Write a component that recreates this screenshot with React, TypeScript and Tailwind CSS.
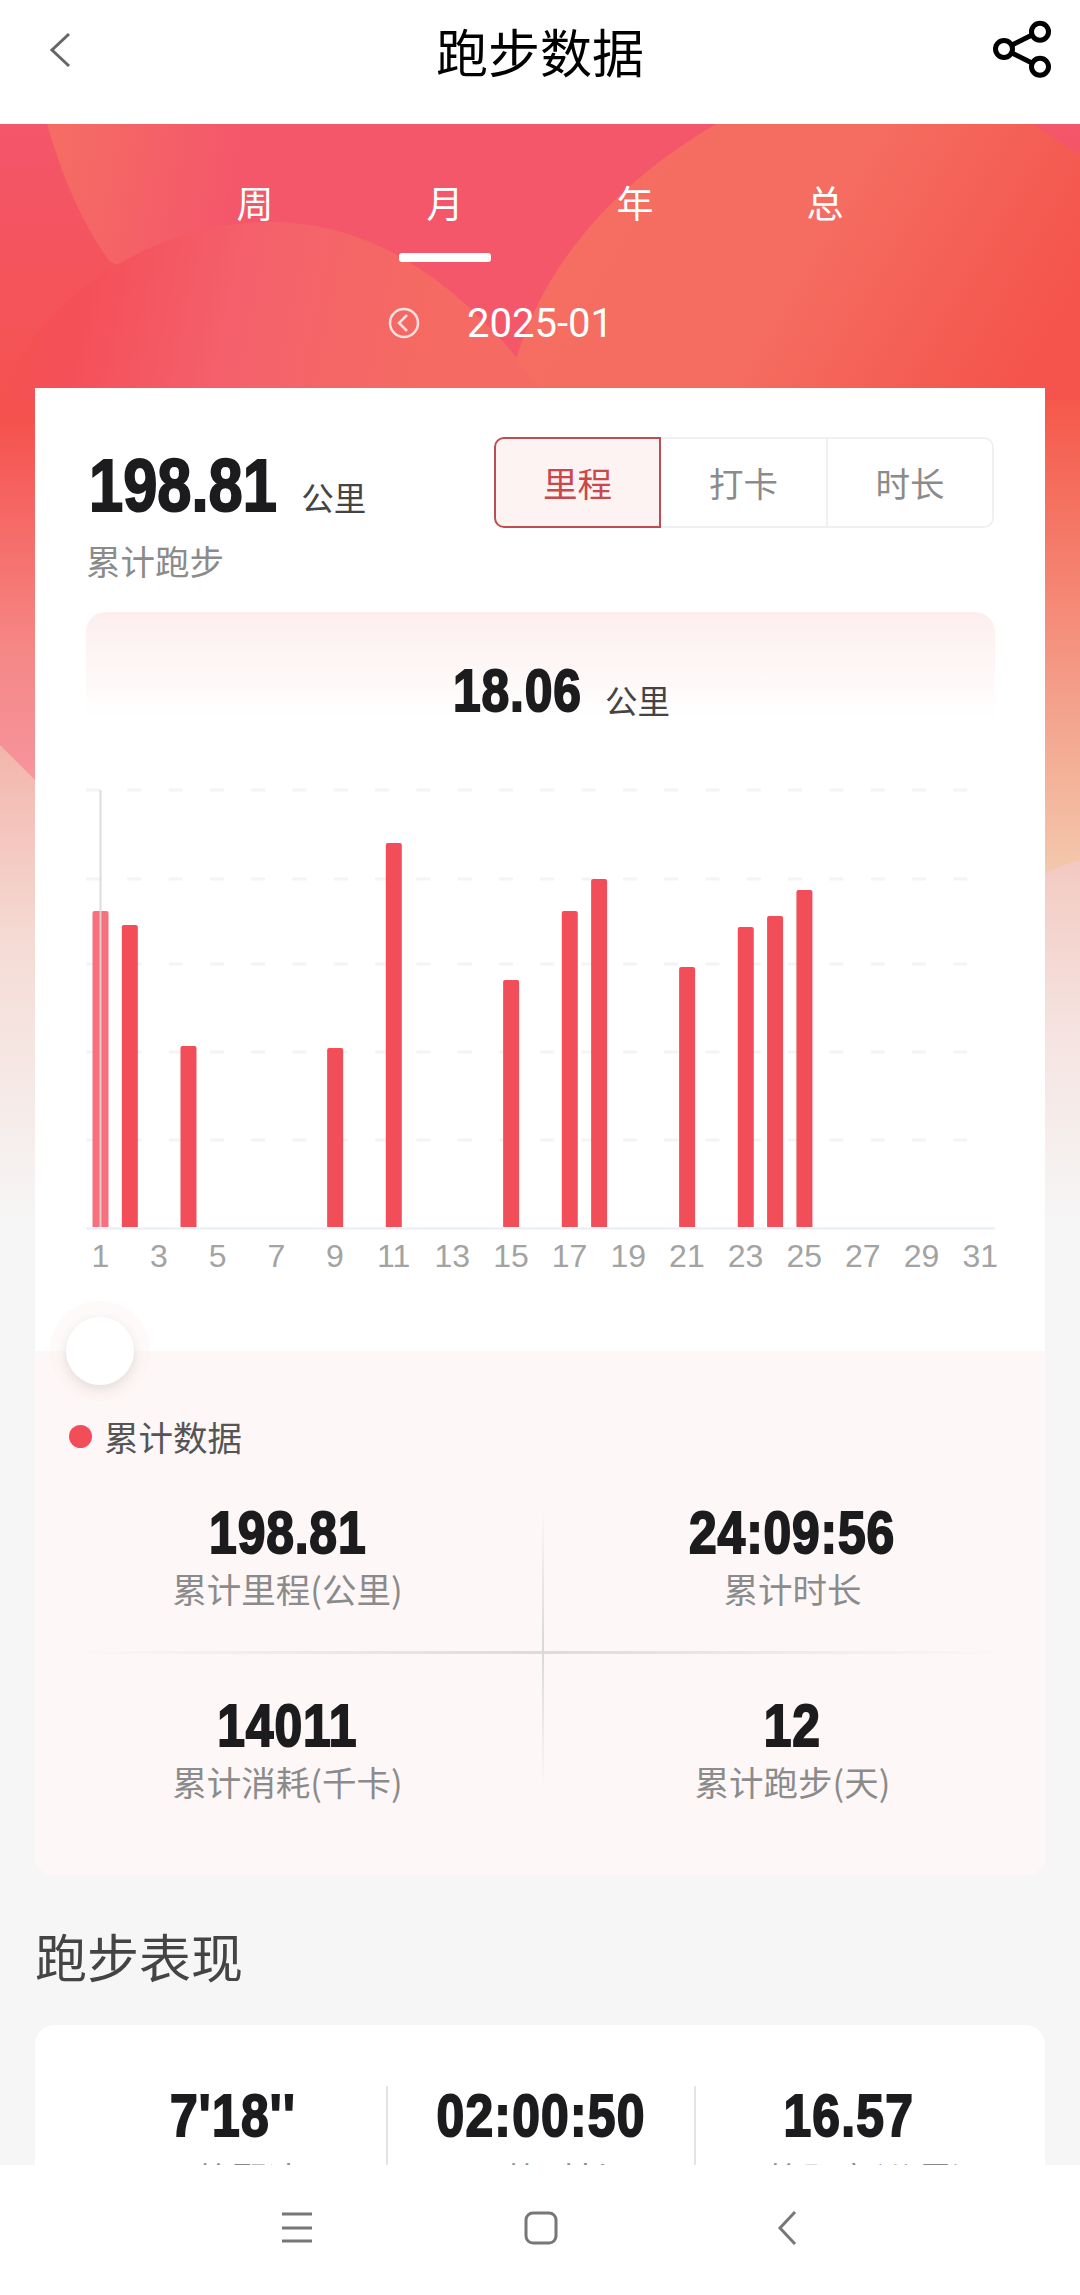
const N = "inline-block font-['Liberation_Sans',sans-serif] font-bold text-[#1c1c1e] [-webkit-text-stroke:2px_#1c1c1e] scale-x-[0.83]";
const C = "font-['Noto_Sans_CJK_SC','Liberation_Sans',sans-serif]";

const bars: [number, number][] = [[1, 911], [2, 925], [4, 1046], [9, 1048], [11, 843], [15, 980], [17, 911], [18, 879], [21, 967], [23, 927], [24, 916], [25, 890]];

function HeroBg() {
  return (
    <svg className="absolute left-0 top-[124px] w-[1080px] h-[1100px]" viewBox="0 124 1080 1100" aria-hidden="true">
      <defs>
        <linearGradient id="base" x1="0" y1="124" x2="0" y2="1224" gradientUnits="userSpaceOnUse">
          <stop offset="0" stopColor="#f4566a" />
          <stop offset="0.27" stopColor="#f5524e" />
          <stop offset="0.48" stopColor="#f58886" />
          <stop offset="0.58" stopColor="#f6929a" />
          <stop offset="0.78" stopColor="#f5dcd8" />
          <stop offset="1" stopColor="#f6f6f6" />
        </linearGradient>
        <linearGradient id="orange" x1="520" y1="140" x2="1000" y2="420" gradientUnits="userSpaceOnUse">
          <stop offset="0" stopColor="#f56f62" />
          <stop offset="0.55" stopColor="#f56c60" />
          <stop offset="1" stopColor="#f4544c" />
        </linearGradient>
        <linearGradient id="pink" x1="60" y1="124" x2="600" y2="230" gradientUnits="userSpaceOnUse">
          <stop offset="0" stopColor="#f56c64" />
          <stop offset="0.35" stopColor="#f4566a" />
          <stop offset="1" stopColor="#f4566a" />
        </linearGradient>
        <linearGradient id="lower" x1="0" y1="300" x2="420" y2="388" gradientUnits="userSpaceOnUse">
          <stop offset="0" stopColor="#f5524e" />
          <stop offset="0.2" stopColor="#f4505a" />
          <stop offset="0.55" stopColor="#f4616c" />
          <stop offset="1" stopColor="#f56a62" />
        </linearGradient>
        <linearGradient id="rightTint" x1="0" y1="400" x2="0" y2="880" gradientUnits="userSpaceOnUse">
          <stop offset="0" stopColor="#f5584a" />
          <stop offset="0.5" stopColor="#f4927e" />
          <stop offset="1" stopColor="#f3caae" />
        </linearGradient>
        <linearGradient id="leftLow" x1="0" y1="740" x2="0" y2="1224" gradientUnits="userSpaceOnUse">
          <stop offset="0" stopColor="#f3b4aa" />
          <stop offset="0.43" stopColor="#f5dcd6" />
          <stop offset="1" stopColor="#f6f6f6" />
        </linearGradient>
        <linearGradient id="rightLow" x1="0" y1="850" x2="0" y2="1224" gradientUnits="userSpaceOnUse">
          <stop offset="0" stopColor="#f3c8c0" />
          <stop offset="0.5" stopColor="#f5e4e1" />
          <stop offset="1" stopColor="#f6f6f6" />
        </linearGradient>
      </defs>
      <rect x="0" y="124" width="1080" height="1100" fill="url(#base)" />
      <path d="M47 124 C62 175 80 220 110 262 L560 400 L720 124 Z" fill="url(#pink)" />
      <path d="M0 400 C40 290 160 222 270 222 C380 222 470 290 550 400 Z" fill="url(#lower)" />
      <path d="M716 124 C620 180 545 260 516 360 L550 400 L1080 400 L1080 155 L1033 124 Z" fill="url(#orange)" />
      <rect x="1000" y="400" width="80" height="480" fill="url(#rightTint)" />
      <path d="M0 745 L40 785 L40 1224 L0 1224 Z" fill="url(#leftLow)" />
      <path d="M1000 900 C1030 880 1060 865 1080 860 L1080 1224 L1000 1224 Z" fill="url(#rightLow)" />
    </svg>
  );
}

function Stat({ value, label }: { value: string; label: string }) {
  return (
    <div className="flex flex-col items-center">
      <div className={`${N} text-[60px] leading-[44px] tracking-[1px]`}>{value}</div>
      <div className={`${C} mt-[11px] text-[34.5px] leading-[44px] text-[#8b8b8b]`}>{label}</div>
    </div>
  );
}

export default function App() {
  return (
    <div className={`${C} relative w-[1080px] h-[2295px] overflow-hidden bg-[#f6f6f6]`}>
      <HeroBg />
      <header className="relative flex h-[124px] items-start justify-between bg-white">
        <svg className="ml-[48px] mt-[32px] h-[36px] w-[24px]" viewBox="0 0 24 36" fill="none" stroke="#666" strokeWidth="3" aria-hidden="true">
          <path d="M21 2 L4 18 L21 34" />
        </svg>
        <h1 className="absolute left-0 right-0 top-[16px] text-center text-[52px] leading-[70px] text-black">跑步数据</h1>
        <svg className="mr-[26px] mt-[18px] h-[62px] w-[62px]" viewBox="0 0 62 62" fill="none" stroke="#000" strokeWidth="5" aria-hidden="true">
          <circle cx="12" cy="31" r="8.5" />
          <circle cx="48" cy="13.7" r="8.5" />
          <circle cx="48" cy="48.7" r="8.5" />
          <path d="M20 27 L40 17 M20 35 L40 45" />
        </svg>
      </header>

      <div className="relative">
        <nav className="flex h-[139px] pl-[160px] text-white">
          {["周", "月", "年", "总"].map((t, i) => (
            <div key={t} className="relative flex h-full w-[190px] justify-center pt-[53px] text-[37px] leading-[50px]">
              {t}
              {i === 1 && <span className="absolute left-[49px] top-[129px] h-[9px] w-[92px] rounded-[3px] bg-white" />}
            </div>
          ))}
        </nav>
        <div className="flex h-[125px] items-start text-white">
          <svg className="ml-[388px] mt-[44px] h-[32px] w-[32px]" viewBox="0 0 32 32" fill="none" stroke="#fff" strokeOpacity="0.8" strokeWidth="2.5" aria-hidden="true">
            <circle cx="16" cy="16" r="14" />
            <path d="M19 8 L11 16 L19 24" />
          </svg>
          <span className="ml-[47px] mt-[36px] font-['Roboto',sans-serif] text-[40px] leading-[50px]">2025-01</span>
        </div>

        <main className="relative mx-[35px] rounded-b-[20px] bg-white">
          <section className="h-[963px] px-[51px]">
            <div className="flex items-start justify-between pt-[49px]">
              <div className="pt-[7px]">
                <div className="flex items-baseline">
                  <span className={`${N} ml-[3px] mr-[-38px] origin-left text-[74px] leading-[84px]`}>198.81</span>
                  <span className="ml-[24px] text-[32.5px] leading-[44px] text-[#444]">公里</span>
                </div>
                <div className="mt-[9px] text-[34.5px] leading-[46px] text-[#8b8b8b]">累计跑步</div>
              </div>
              <div className="flex h-[91px] w-[500px] text-[34.5px] text-[#8b8b8b]">
                <div className="flex w-[167px] items-center justify-center rounded-l-[10px] border-2 border-[#bd4d50] bg-[#fdf3f2] text-[#c9484c]">里程</div>
                <div className="flex w-[167px] items-center justify-center border-y-2 border-r-2 border-[#eff0f2]">打卡</div>
                <div className="flex w-[166px] items-center justify-center rounded-r-[10px] border-y-2 border-r-2 border-[#eff0f2]">时长</div>
              </div>
            </div>
            <div className="mt-[29px] flex h-[108px] w-[909px] items-start justify-center rounded-t-[20px] bg-gradient-to-b from-[#fdeeee] to-white pl-[42px] pt-[45px]">
              <span className={`${N} mr-[-26px] origin-left text-[60px] leading-[68px] tracking-[1px]`}>18.06</span>
              <span className="ml-[23px] mt-[21px] text-[32.5px] leading-[44px] text-[#444]">公里</span>
            </div>
            <svg className="-ml-[51px] mt-[40px] block h-[480px] w-[1011px]" viewBox="35 760 1011 480" aria-hidden="true">
              {[790, 879, 964, 1052, 1140].map((y) => (
                <line key={y} x1="86" x2="970" y1={y} y2={y} stroke="#f4f4f4" strokeWidth="3" strokeDasharray="14 27.3" />
              ))}
              <line x1="86" x2="995" y1="1228.5" y2="1228.5" stroke="#e9edf5" strokeWidth="2" />
              {bars.map(([d, top]) => {
                const x = 100.5 + 29.33 * (d - 1) - 8;
                return <path key={d} d={`M${x} 1227 V${top + 2} q0 -2 2 -2 H${x + 14} q2 0 2 2 V1227 Z`} fill={d === 1 ? "#f8707e" : "#f24e5a"} />;
              })}
              <line x1="100.5" x2="100.5" y1="790" y2="1227" stroke="#d8d8d8" strokeWidth="2" strokeOpacity="0.9" />
            </svg>
            <div className="-ml-[15px] -mt-[4px] grid w-[939px] grid-cols-[repeat(16,58.66px)] font-['Liberation_Sans',sans-serif] text-[32px] leading-[40px] text-[#a3a3a3]">
              {Array.from({ length: 16 }, (_, i) => (
                <span key={i} className="text-center">{i * 2 + 1}</span>
              ))}
            </div>
          </section>

          <span className="absolute left-[31px] top-[929px] h-[68px] w-[68px] rounded-full bg-white shadow-[0_4px_12px_rgba(0,0,0,0.1),0_0_0_16px_rgba(250,235,232,0.25)]" />

          <section className="h-[524px] rounded-b-[20px] bg-[#fdf8f7] px-[34px] pt-[63px]">
            <div className="flex items-center text-[34.5px] leading-[44px] text-[#555]">
              <span className="mr-[12px] h-[23px] w-[23px] rounded-full bg-[#f24e5a]" />
              累计数据
            </div>
            <div className="relative -mx-[34px] mt-[53px] grid grid-cols-2">
              <div className="pb-[47px]"><Stat value="198.81" label="累计里程(公里)" /></div>
              <div className="pb-[47px]"><Stat value="24:09:56" label="累计时长" /></div>
              <div className="pt-[47px]"><Stat value="14011" label="累计消耗(千卡)" /></div>
              <div className="pt-[47px]"><Stat value="12" label="累计跑步(天)" /></div>
              <span className="absolute left-[35px] top-[140px] h-[3px] w-[940px] bg-gradient-to-r from-transparent via-[#dcdcdc] to-transparent" />
              <span className="absolute left-[507px] top-[-4px] h-[283px] w-[2px] bg-gradient-to-b from-transparent via-[#d8d8d8] to-transparent" />
            </div>
          </section>
        </main>

        <h2 className="ml-[35px] mt-[46px] text-[52px] leading-[70px] text-[#444]">跑步表现</h2>
        <section className="mx-[35px] mt-[34px] h-[200px] rounded-t-[20px] bg-white">
          <div className="grid grid-cols-[351px_308px_352px] pt-[61px]">
            {[["7'18''", "平均配速", "pl-[44px]"], ["02:00:50", "平均时长", "border-l-2 border-[#e4e4e4]"], ["16.57", "平均距离(公里)", "border-l-2 border-[#e4e4e4] pr-[44px]"]].map(([v, l, c]) => (
              <div key={v} className={`flex flex-col items-center ${c}`}>
                <span className={`${N} text-[60px] leading-[60px] tracking-[1.5px]`}>{v}</span>
                <span className="mt-[9px] text-[34.5px] leading-[44px] text-[#8b8b8b]">{l}</span>
              </div>
            ))}
          </div>
        </section>
      </div>

      <footer className="absolute bottom-0 left-0 right-0 flex h-[130px] items-start bg-white">
        <svg className="ml-[280px] mt-[46px] h-[34px] w-[34px]" viewBox="0 0 34 34" stroke="#777" strokeWidth="3" aria-hidden="true">
          <path d="M2 3 H32 M2 17 H32 M2 30 H32" />
        </svg>
        <svg className="ml-[210px] mt-[46px] h-[34px] w-[34px]" viewBox="0 0 34 34" fill="none" stroke="#777" strokeWidth="3" aria-hidden="true">
          <rect x="2" y="2" width="30" height="30" rx="7" />
        </svg>
        <svg className="ml-[219px] mt-[46px] h-[34px] w-[20px]" viewBox="0 0 20 34" fill="none" stroke="#777" strokeWidth="3" aria-hidden="true">
          <path d="M18 1 L3 17 L18 33" />
        </svg>
      </footer>
    </div>
  );
}
